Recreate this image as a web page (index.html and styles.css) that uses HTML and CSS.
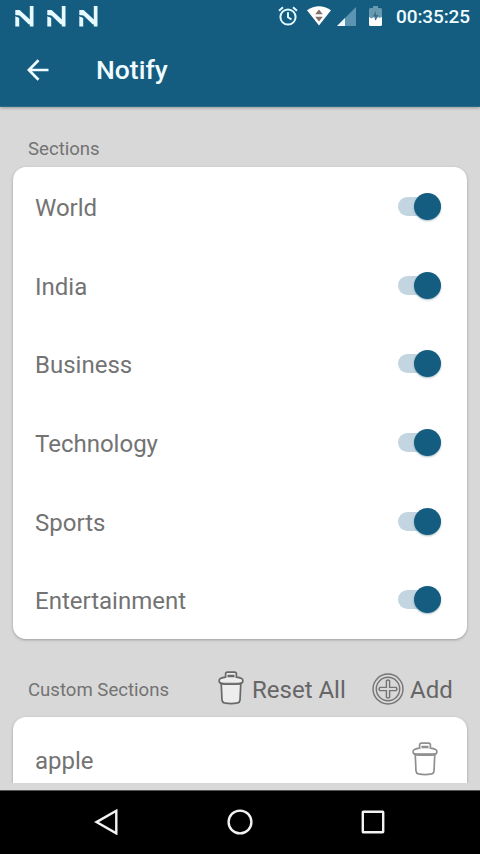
FILE: index.html
```html
<!DOCTYPE html>
<html lang="en">
<head>
<meta charset="utf-8">
<title>Notify</title>
<link rel="stylesheet" href="styles.css">
</head>
<body>
<svg class="defs" width="0" height="0" aria-hidden="true">
  <symbol id="brand" viewBox="0 0 20 22">
    <rect x="14.8" y="0" width="3.7" height="20.5"/>
    <path d="M.3 3.9H4.6L15.2 13.8V18.6L13.6 18.2 4.5 9.6.3 8.9zM.3 10.2 4.2 12V20.5H.3z"/>
  </symbol>
  <symbol id="bin" viewBox="0 0 26 34">
    <path class="bin-body" d="M3.2 12 4 29.2Q4.2 31.4 6.4 31.9 13 33.2 19.6 31.9 21.8 31.4 22 29.2L22.8 12z"/>
    <path class="bin-body" d="M7.6 6.2V3.1Q7.6 1.2 9.5 1.2H16.5Q18.4 1.2 18.4 3.1V6.2Q24.8 7 24.8 9.2V10.4Q24.6 12.5 21 12.7H5Q1.4 12.5 1.2 10.4V9.2Q1.2 7 7.6 6.2z"/>
    <path d="M3 12.6Q13 13.8 23 12.6M10.3 5.5V4.6H15.7V5.5z"/>
  </symbol>
</svg>
<div class="screen">
  <header class="top">
    <div class="status">
      <div class="brands">
        <svg><use href="#brand"/></svg>
        <svg><use href="#brand"/></svg>
        <svg><use href="#brand"/></svg>
      </div>
      <div class="indicators">
        <svg class="alarm" viewBox="0 0 20 20"><circle cx="10" cy="11" r="7.6"/><path d="M10 6.3V11.3L13.5 13.5M1 4.8 5 1.3M19 4.8 15 1.3"/></svg>
        <svg class="wifi" viewBox="0 0 24 20"><path fill="#fff" d="M0 4.2Q12-3.8 24 4.2L12 19.4z"/><path fill="#84706b" d="M8.2 8.3 12 3.5 15.8 8.3zM8.2 10.8H15.8L12 15.5z"/></svg>
        <svg class="signal" viewBox="0 0 19 19"><path fill="#5c95b1" d="M19 0V19H0z"/><path fill="#eefaff" d="M8 11V19H0z"/></svg>
        <svg class="battery" viewBox="0 0 13 20"><path fill="#6799b1" d="M4 0H9V2H11.5Q13 2 13 3.5V13H0V3.5Q0 2 1.5 2H4z"/><path fill="#fff" d="M0 11 2.5 12.5 5 11 6.5 14.5 9 11 10.5 12 13 11V18.5Q13 20 11.5 20H1.5Q0 20 0 18.5z"/><path fill="#3e6f88" d="M7 5V9H9.5L6.3 14V10.5H3.8z"/></svg>
        <span class="clock">00:35:25</span>
      </div>
    </div>
    <div class="bar">
      <svg class="back" viewBox="0 0 22 22"><path d="M21.5 11H2M11.5 1.3 1.8 11 11.5 20.7"/></svg>
      <h1>Notify</h1>
    </div>
  </header>
  <main>
    <h2>Sections</h2>
    <section class="card">
      <div class="row"><span>World</span><i class="switch"></i></div>
      <div class="row"><span>India</span><i class="switch"></i></div>
      <div class="row"><span>Business</span><i class="switch"></i></div>
      <div class="row"><span>Technology</span><i class="switch"></i></div>
      <div class="row"><span>Sports</span><i class="switch"></i></div>
      <div class="row"><span>Entertainment</span><i class="switch"></i></div>
    </section>
    <div class="custom">
      <h2>Custom Sections</h2>
      <div class="action reset"><svg class="bin dark"><use href="#bin"/></svg><span>Reset All</span></div>
      <div class="action add">
        <svg class="plus" viewBox="0 0 32 32"><circle cx="16" cy="16" r="15"/><circle cx="16" cy="16" r="11.7"/><path d="M14.4 7.8Q16 6.3 17.6 7.8V14.4H24.2Q25.7 16 24.2 17.6H17.6V24.2Q16 25.7 14.4 24.2V17.6H7.8Q6.3 16 7.8 14.4H14.4z"/></svg>
        <span>Add</span>
      </div>
    </div>
    <section class="card cut">
      <div class="row"><span>apple</span><svg class="bin"><use href="#bin"/></svg></div>
    </section>
  </main>
  <nav>
    <svg viewBox="0 0 26 26"><path d="M22.3 1.8V24.4L2.5 13.1z"/></svg>
    <svg viewBox="0 0 26 26"><circle cx="13" cy="13" r="11.4"/></svg>
    <svg viewBox="0 0 26 26"><rect x="2.8" y="2.8" width="20.4" height="20.4" rx=".5"/></svg>
  </nav>
</div>
</body>
</html>
```
FILE: styles.css
```css
* { box-sizing: border-box; }
body { margin: 0; font-family: Roboto, "Liberation Sans", sans-serif; color: #737373; }
svg { display: block; flex: none; }
.defs { position: absolute; }
h1, h2 { margin: 0; }
.screen { width: 480px; height: 854px; display: flex; flex-direction: column; overflow: hidden; background: #d8d8d8; }

.top { height: 107px; flex: none; background: #145d80; border-bottom: 1px solid #2b6b86; box-shadow: 0 1px 3px rgba(0, 0, 0, .3); color: #f0fcff; }
.status { height: 33px; display: flex; justify-content: space-between; padding: 0 10px 0 15px; }
.brands { display: flex; gap: 12px; padding-top: 6px; }
.brands svg { width: 20px; height: 22px; fill: #e6faff; }
.indicators { display: flex; align-items: center; }
.alarm { width: 20px; height: 20px; margin: -2px 9px 0 0; fill: none; stroke: #e0f8ff; stroke-width: 2; }
.wifi { width: 24px; height: 20px; margin: -2px 7px 0 0; }
.signal { width: 19px; height: 19px; margin: 0 14px 0 -1px; }
.battery { width: 13px; height: 20px; margin: -1px 14px 0 -1px; }
.clock { font-size: 19px; font-weight: 500; letter-spacing: -.1px; width: 74px; white-space: nowrap; }
.bar { height: 73px; display: flex; align-items: center; padding: 0 0 0 27px; }
.back { width: 22px; height: 22px; margin: 0 47px 0 0; fill: none; stroke: #f0fcff; stroke-width: 2.7; }
h1 { font-size: 26.5px; font-weight: 500; line-height: 32px; }

main { height: 676px; flex: none; overflow: hidden; padding: 0 13px; }
h2 { font-size: 18.6px; font-weight: 400; line-height: 24px; }
main > h2 { padding: 30px 0 0 15px; height: 60px; }
.card { width: 454px; background: #fff; border-radius: 13px; box-shadow: 0 1px 3px rgba(0, 0, 0, .28); font-size: 24px; }
.row { height: 78.7px; display: flex; align-items: center; justify-content: space-between; padding: 3px 26px 0 22px; }
.switch { width: 43px; height: 19px; margin-top: -3px; display: flex; align-items: center; justify-content: flex-end; background: #c2d5e0; border-radius: 9.5px; }
.switch::after { content: ""; flex: none; width: 27px; height: 27px; border-radius: 50%; background: #145d80; box-shadow: 0 1px 2px rgba(0, 60, 80, .35); }
.custom { height: 77.8px; display: flex; align-items: center; padding: 24px 0 0 15px; }
.custom h2 { width: 190px; }
.action { display: flex; align-items: center; font-size: 24px; color: #666; white-space: nowrap; }
.reset { width: 154px; gap: 8px; }
.add { gap: 6px; }
.bin { width: 26px; height: 34px; margin-top: -4px; fill: none; stroke: #909090; stroke-width: 1.7; }
.dark { stroke: #686868; fill: #ededed; margin-top: -4px; }
.plus { width: 32px; height: 32px; margin-top: -2px; fill: none; stroke: #747474; stroke-width: 1.4; }
.cut { height: 67px; overflow: hidden; border-radius: 13px 13px 0 0; }
.cut .row { height: 86px; padding-right: 29px; }

nav { flex: 1; margin-top: 7px; background: #000; border-top: 1px solid #555; display: flex; justify-content: space-between; align-items: center; padding: 0 94px 2px; }
nav svg { width: 26px; height: 26px; fill: none; stroke: #f2f2f2; stroke-width: 2.4; }
```
